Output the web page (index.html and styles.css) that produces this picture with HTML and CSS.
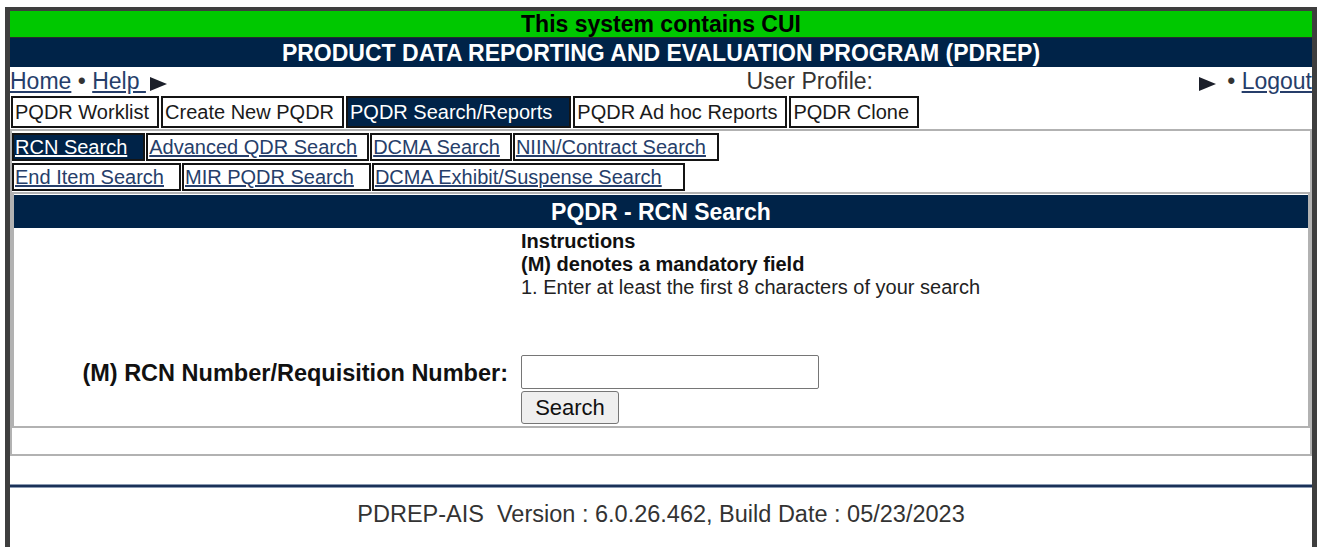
FILE: index.html
```html
<!DOCTYPE html>
<html lang="en">
<head>
<meta charset="utf-8">
<title>PDREP - PQDR RCN Search</title>
<link rel="stylesheet" href="styles.css">
</head>
<body>
<div class="frame">
  <div class="cui-banner">This system contains CUI</div>
  <div class="app-title">PRODUCT DATA REPORTING AND EVALUATION PROGRAM (PDREP)</div>

  <div class="util-bar">
    <div class="util-left"><a href="#">Home</a> • <a href="#">Help </a><svg class="pointer pointer-after" viewBox="0 0 17 14" aria-hidden="true"><polygon points="0,0 17,7 0,14"/></svg></div>
    <div class="util-mid">User Profile:</div>
    <div class="util-right"><svg class="pointer pointer-before" viewBox="0 0 17 14" aria-hidden="true"><polygon points="0,0 17,7 0,14"/></svg>• <a href="#">Logout</a></div>
  </div>

  <nav class="tabs">
    <a class="tab" href="#">PQDR Worklist</a>
    <a class="tab" href="#">Create New PQDR</a>
    <a class="tab is-current" href="#">PQDR Search/Reports</a>
    <a class="tab" href="#">PQDR Ad hoc Reports</a>
    <a class="tab" href="#">PQDR Clone</a>
  </nav>

  <div class="workarea">
    <div class="subtabs">
      <div class="subtab-row">
        <a class="subtab is-current pad-16" href="#">RCN Search</a>
        <a class="subtab" href="#">Advanced QDR Search</a>
        <a class="subtab" href="#">DCMA Search</a>
        <a class="subtab pad-11" href="#">NIIN/Contract Search</a>
      </div>
      <div class="subtab-row">
        <a class="subtab pad-15" href="#">End Item Search</a>
        <a class="subtab pad-15" href="#">MIR PQDR Search</a>
        <a class="subtab pad-21" href="#">DCMA Exhibit/Suspense Search</a>
      </div>
    </div>

    <section class="panel">
      <h1 class="panel-title">PQDR - RCN Search</h1>
      <div class="panel-body">
        <div class="panel-row">
          <div class="cell-label"></div>
          <div class="cell-field instructions">
            <div class="strong">Instructions</div>
            <div class="strong">(M) denotes a mandatory field</div>
            <div>1. Enter at least the first 8 characters of your search</div>
          </div>
        </div>
        <form class="panel-row form-row" action="#">
          <label class="cell-label field-label" for="rcn">(M) RCN Number/Requisition Number:</label>
          <div class="cell-field field-stack">
            <input class="text-input" id="rcn" type="text">
            <button class="btn" type="button">Search</button>
          </div>
        </form>
      </div>
    </section>
    <div class="workarea-spacer"></div>
  </div>

  <div class="footer-rule"></div>
  <div class="footer">PDREP-AIS&nbsp; Version : 6.0.26.462, Build Date : 05/23/2023</div>
</div>
</body>
</html>
```

FILE: styles.css
```css
:root {
  --navy: #002348;
  --link: #263e6a;
  --ink: #1a1a1a;
  --rule-gray: #b2b2b2;
}

* {
  box-sizing: border-box;
}

html,
body {
  margin: 0;
  padding: 0;
  background: #fff;
}

body {
  font-family: "Liberation Sans", Arial, Helvetica, sans-serif;
  color: #2a2a2a;
  overflow: hidden;
}

/* dark window frame around the whole application */
.frame {
  margin: 7px 3px 0 5px;
  border: solid #3e3e3e;
  border-width: 4px 5px 0 5px;
  min-height: calc(100vh - 7px);
}

/* banners */
.cui-banner {
  height: 27px;
  background: #00c800;
  color: #000;
  font-size: 23px;
  font-weight: bold;
  line-height: 26px;
  text-align: center;
  border-bottom: 1px solid #2c2c2c;
}

.app-title {
  height: 29px;
  padding-top: 1px;
  background: var(--navy);
  color: #fff;
  font-size: 23px;
  font-weight: bold;
  line-height: 28px;
  text-align: center;
}

/* utility links row */
.util-bar {
  display: grid;
  grid-template-columns: 1fr 1fr 1fr;
  height: 29px;
  font-size: 23px;
  line-height: 29px;
  color: #333;
  white-space: nowrap;
}

.util-bar a {
  color: var(--link);
}

.util-mid {
  text-align: right;
  padding-right: 5px;
}

.util-right {
  text-align: right;
}

.pointer {
  width: 17px;
  height: 14px;
  vertical-align: -2px;
  fill: #1b1f2a;
}

.pointer-after {
  margin-left: 4px;
}

.pointer-before {
  margin-right: 11px;
}

/* main tabs */
.tabs {
  display: flex;
  gap: 2px;
  height: 33px;
  padding: 0 0 1px 1px;
}

.tab {
  display: block;
  border: 2px solid #141414;
  background: #fff;
  color: var(--ink);
  font-size: 20px;
  line-height: 28px;
  padding: 0 8px 0 2px;
  text-decoration: none;
  white-space: nowrap;
}

.tab.is-current {
  background: var(--navy);
  color: #fff;
  padding-right: 17px;
}

/* work area: sub tabs + panel */
.workarea {
  border: 2px solid var(--rule-gray);
}

.subtabs {
  padding-top: 2px;
}

.subtab-row {
  display: flex;
  gap: 1px;
}

.subtab-row + .subtab-row {
  margin-top: 2px;
}

.subtab {
  display: block;
  border: 2px solid #141414;
  background: #fff;
  color: var(--link);
  font-size: 20px;
  line-height: 23px;
  padding: 1px 10px 0 1px;
  text-decoration: underline;
  white-space: nowrap;
}

.subtab.is-current {
  background: var(--navy);
  color: #fff;
}

.subtab.pad-11 { padding-right: 11px; }
.subtab.pad-15 { padding-right: 15px; }
.subtab.pad-16 { padding-right: 16px; }
.subtab.pad-21 { padding-right: 21px; }

.panel {
  margin-top: 1px;
  border: 2px solid var(--rule-gray);
}

.panel-title {
  margin: 1px 0 0;
  height: 33px;
  background: var(--navy);
  color: #fff;
  font-size: 23px;
  font-weight: bold;
  line-height: 32px;
  padding-top: 1px;
  text-align: center;
}

.panel-body {
  padding: 2px 0;
}

.panel-row {
  display: flex;
  margin: 0;
}

.cell-label {
  flex: none;
  width: 502px;
  padding-right: 8px;
  text-align: right;
}

.cell-field {
  flex: 1;
  padding-left: 5px;
}

.instructions {
  font-size: 20px;
  line-height: 23px;
  color: #222;
}

.strong {
  font-weight: bold;
  color: #111;
}

.form-row {
  margin-top: 56px;
}

.field-label {
  padding-top: 5px;
  font-size: 23.5px;
  font-weight: bold;
  line-height: 27px;
  color: #111;
}

.field-stack {
  display: flex;
  flex-direction: column;
  align-items: flex-start;
  gap: 2px;
}

.text-input {
  width: 298px;
  height: 34px;
  margin: 0;
  border: 1px solid #767676;
  border-radius: 2px;
  background: #fff;
  font-family: inherit;
  font-size: 20px;
}

.btn {
  width: 98px;
  height: 33px;
  margin: 0;
  padding: 0;
  border: 1px solid #767676;
  border-radius: 3px;
  background: #efefef;
  color: #111;
  font-family: inherit;
  font-size: 22px;
  line-height: 31px;
}

.workarea-spacer {
  height: 26px;
}

/* footer */
.footer-rule {
  margin-top: 28px;
  height: 4px;
  background: #1b3158;
  border-top: 1px solid #8b9ab1;
  border-bottom: 1px solid #8b9ab1;
}

.footer {
  margin-top: 12px;
  font-size: 23.5px;
  line-height: 28px;
  text-align: center;
  color: #333;
}
```
